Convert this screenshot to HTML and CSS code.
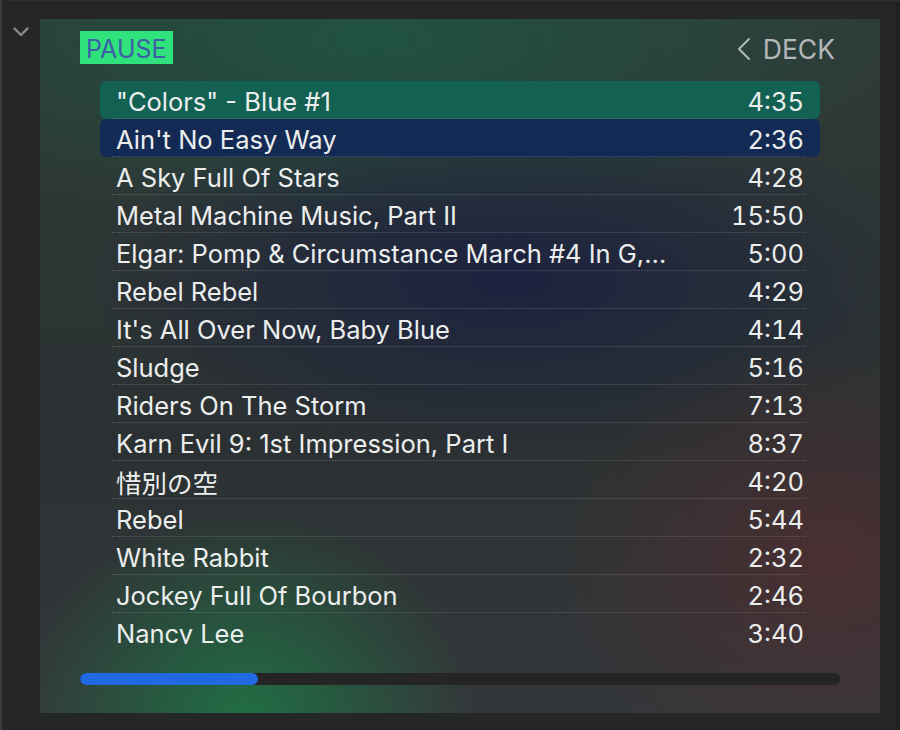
FILE: index.html
```html
<!DOCTYPE html>
<html lang="en">
<head>
<meta charset="utf-8">
<title>Playlist</title>
<link rel="stylesheet" href="styles.css">
</head>
<body>
<div class="app">
  <div class="gutter">
    <svg class="collapse" width="16" height="10" viewBox="0 0 16 10"><polyline points="1.5,1.5 8,8 14.5,1.5" fill="none" stroke="#8c8c8e" stroke-width="2.4" stroke-linecap="round" stroke-linejoin="round"/></svg>
  </div>
  <main class="panel">
    <header class="head">
      <span class="pause">PAUSE</span>
      <span class="deck"><svg class="back" width="14" height="24" viewBox="0 0 14 24"><polyline points="12,2 2,12 12,22" fill="none" stroke="#b4b7ba" stroke-width="2" stroke-linecap="round" stroke-linejoin="round"/></svg>DECK</span>
    </header>
    <ul class="list">
      <li class="row playing"><div class="inner"><span class="title">"Colors" - Blue #1</span><span class="time">4:35</span></div></li>
      <li class="row selected"><div class="inner"><span class="title">Ain't No Easy Way</span><span class="time">2:36</span></div></li>
      <li class="row"><div class="inner"><span class="title">A Sky Full Of Stars</span><span class="time">4:28</span></div></li>
      <li class="row"><div class="inner"><span class="title">Metal Machine Music, Part II</span><span class="time">15:50</span></div></li>
      <li class="row"><div class="inner"><span class="title elgar">Elgar: Pomp &amp; Circumstance March #4 In G, Op. 39</span><span class="time">5:00</span></div></li>
      <li class="row"><div class="inner"><span class="title">Rebel Rebel</span><span class="time">4:29</span></div></li>
      <li class="row"><div class="inner"><span class="title">It's All Over Now, Baby Blue</span><span class="time">4:14</span></div></li>
      <li class="row"><div class="inner"><span class="title">Sludge</span><span class="time">5:16</span></div></li>
      <li class="row"><div class="inner"><span class="title">Riders On The Storm</span><span class="time">7:13</span></div></li>
      <li class="row"><div class="inner"><span class="title">Karn Evil 9: 1st Impression, Part I</span><span class="time">8:37</span></div></li>
      <li class="row"><div class="inner"><span class="title">惜別の空</span><span class="time">4:20</span></div></li>
      <li class="row"><div class="inner"><span class="title">Rebel</span><span class="time">5:44</span></div></li>
      <li class="row"><div class="inner"><span class="title">White Rabbit</span><span class="time">2:32</span></div></li>
      <li class="row"><div class="inner"><span class="title">Jockey Full Of Bourbon</span><span class="time">2:46</span></div></li>
      <li class="row"><div class="inner"><span class="title">Nancy Lee</span><span class="time">3:40</span></div></li>
    </ul>
    <div class="progress"><div class="fill" style="width:178px"></div></div>
  </main>
  <div class="edge"></div>
</div>
</body>
</html>
```

FILE: styles.css
```css
* { box-sizing: border-box; }
html, body { margin: 0; padding: 0; }
body {
  width: 900px;
  height: 730px;
  overflow: hidden;
  background: #252628;
  font-family: "Inter", "Noto Sans CJK JP", sans-serif;
  color: #eceeee;
}
.app {
  display: flex;
  height: 730px;
  border-left: 2px solid #3a3b3d;
  border-top: 1px solid #2d2e30;
}
.gutter {
  width: 38px;
  flex: none;
  padding: 26px 0 0 11px;
}
.collapse { display: block; }
.edge {
  width: 20px;
  flex: none;
  border-right: 4px solid #1f2022;
}
.panel {
  width: 840px;
  height: 694px;
  margin-top: 18px;
  flex: none;
  padding: 12px 40px 0 40px;
  background:
    radial-gradient(ellipse 230px 210px at 205px 700px, rgba(28,120,70,0.85), rgba(28,120,70,0) 100%),
    radial-gradient(ellipse 280px 220px at 790px 540px, rgba(85,45,48,0.7), rgba(85,45,48,0) 100%),
    radial-gradient(ellipse 420px 180px at 470px 260px, rgba(26,32,64,0.9), rgba(26,32,64,0) 100%),
    radial-gradient(ellipse 560px 190px at 330px 20px, rgba(28,88,68,0.8), rgba(28,88,68,0) 100%),
    linear-gradient(180deg, #303a38 0%, #2b3132 60%, #34373a 100%);
}
.head {
  display: flex;
  justify-content: space-between;
  align-items: center;
  height: 33px;
  padding-right: 5px;
}
.pause {
  background: #30e27c;
  color: #3e5fa6;
  font-size: 25px;
  height: 33px;
  line-height: 30px;
  padding: 3px 6px 0 6px;
}
.deck {
  display: flex;
  align-items: center;
  gap: 12px;
  color: #b4b7ba;
  font-size: 26.5px;
  padding-top: 3px;
}
.list {
  list-style: none;
  margin: 17px 20px 0 20px;
  padding: 0;
  height: 563px;
  overflow: hidden;
}
.row {
  height: 38px;
  padding: 0 14px 0 12px;
  border-radius: 6px;
}
.row.playing { background: #136152; }
.row.selected { background: #132b54; }
.inner {
  height: 38px;
  display: flex;
  align-items: center;
  justify-content: space-between;
  padding: 3px 2px 0 4px;
  border-bottom: 1px dotted rgba(255,255,255,0.2);
  font-size: 25.5px;
}
.title {
  white-space: nowrap;
  overflow: hidden;
  text-overflow: ellipsis;
}
.title.elgar { max-width: 556px; }
.time { flex: none; font-variant-numeric: tabular-nums; }
.progress {
  margin-top: 29px;
  height: 12px;
  border-radius: 6px;
  background: #252525;
  overflow: hidden;
}
.fill {
  height: 12px;
  border-radius: 6px;
  background: #2169e0;
}
```
